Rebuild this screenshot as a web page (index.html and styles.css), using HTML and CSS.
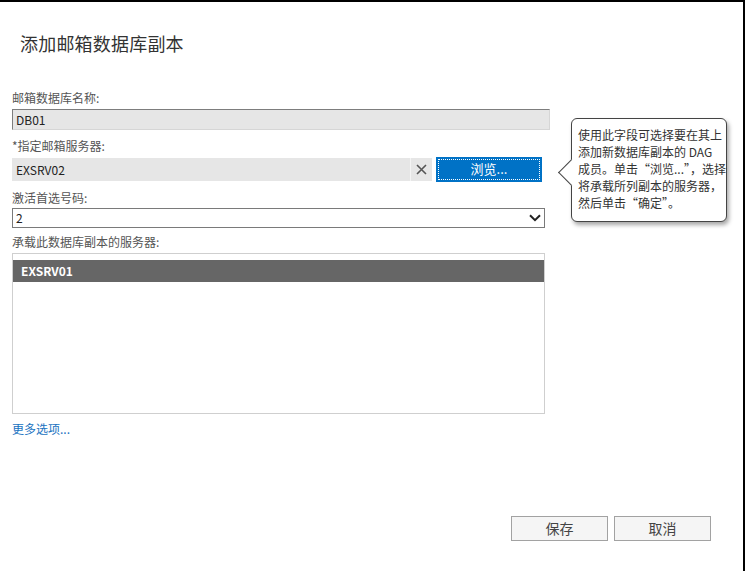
FILE: index.html
```html
<!DOCTYPE html>
<html lang="zh-CN">
<head>
<meta charset="utf-8">
<title>添加邮箱数据库副本</title>
<link rel="stylesheet" href="styles.css">
</head>
<body>
<div class="frame">
  <h1 class="title">添加邮箱数据库副本</h1>
  <div class="form">
    <div class="label first">邮箱数据库名称:</div>
    <div class="input readonly">DB01</div>

    <div class="label">*指定邮箱服务器:</div>
    <div class="picker-row">
      <div class="picker">
        <span class="picker-text">EXSRV02</span>
        <span class="picker-clear">
          <svg width="11" height="11" viewBox="0 0 11 11"><path d="M1 1 L10 10 M10 1 L1 10" stroke="#555" stroke-width="1.6" fill="none"/></svg>
        </span>
      </div>
      <div class="browse"><span class="browse-inner">浏览...</span></div>
    </div>

    <div class="label l3">激活首选号码:</div>
    <div class="select">
      <span>2</span>
      <svg class="chev" width="12" height="8" viewBox="0 0 12 8"><path d="M1 1.2 L6 6.2 L11 1.2" stroke="#222" stroke-width="2" fill="none"/></svg>
    </div>

    <div class="label l4">承载此数据库副本的服务器:</div>
    <div class="list">
      <div class="list-item selected">EXSRV01</div>
    </div>

    <a class="more" href="#">更多选项...</a>
  </div>

  <div class="actions">
    <button class="btn">保存</button>
    <button class="btn">取消</button>
  </div>

  <div class="tip">
    <span class="tip-arrow"></span>
    <div class="tip-text">使用此字段可选择要在其上<br>添加新数据库副本的 DAG<br>成员。单击“浏览...”，选择<br>将承载所列副本的服务器，<br>然后单击“确定”。</div>
  </div>
</div>
</body>
</html>
```

FILE: styles.css
```css
* { box-sizing: border-box; }

html, body {
  margin: 0;
  padding: 0;
  background: #fff;
}

body {
  font-family: "Noto Sans CJK SC", "Noto Sans", sans-serif;
  color: #444;
}

.frame {
  position: relative;
  width: 745px;
  height: 571px;
  border-top: 2px solid #000;
  border-right: 2px solid #000;
  overflow: hidden;
}

.title {
  margin: 0;
  padding: 29px 0 0 20px;
  font-size: 18px;
  line-height: 24px;
  font-weight: normal;
  color: #333;
  letter-spacing: 0.2px;
}

.form {
  padding-left: 12px;
  width: 551px;
  display: flex;
  flex-direction: column;
}

.label {
  font-size: 12px;
  line-height: 16px;
  height: 16px;
  color: #555;
  margin-top: 8px;
  margin-bottom: 3px;
}

.label.first {
  margin-top: 35px;
}

.label.l3 {
  margin-top: 8px;
  margin-bottom: 2px;
}

.label.l4 {
  margin-top: 6px;
  margin-bottom: 3px;
}

.input {
  height: 21px;
  width: 538px;
  font-size: 12px;
  line-height: 19px;
  padding-left: 3px;
  color: #222;
}

.readonly {
  background: #e6e6e6;
  border: 1px solid;
  border-color: #7d7d7d #d6d6d6 #d6d6d6 #7d7d7d;
}

.picker-row {
  display: flex;
  align-items: center;
  height: 25px;
}

.picker {
  display: flex;
  width: 420px;
  height: 23px;
  background: #e6e6e6;
}

.picker-text {
  flex: 1;
  font-size: 12px;
  line-height: 23px;
  padding-left: 4px;
  color: #222;
}

.picker-clear {
  width: 22px;
  height: 23px;
  border-left: 1px solid #f4f4f4;
  display: flex;
  align-items: center;
  justify-content: center;
}

.browse {
  margin-left: 4px;
  width: 106px;
  height: 25px;
  background: #0072c6;
  padding: 2px;
}

.browse-inner {
  display: block;
  height: 21px;
  border: 1px dotted #fff;
  color: #fff;
  font-size: 13px;
  line-height: 18px;
  text-align: center;
}

.select {
  width: 533px;
  height: 20px;
  border: 1px solid #7a7a7a;
  background: #fff;
  font-size: 12px;
  line-height: 18px;
  padding-left: 3px;
  color: #222;
  display: flex;
  align-items: center;
  justify-content: space-between;
  padding-right: 3px;
}

.chev { display: block; }

.list {
  width: 533px;
  height: 161px;
  border: 1px solid #cfcfcf;
  padding: 6px 0 0 0;
}

.list-item {
  height: 22px;
  line-height: 22px;
  font-size: 12px;
  padding-left: 8px;
}

.list-item.selected {
  background: #666;
  color: #fff;
  font-weight: bold;
}

.more {
  margin-top: 7px;
  font-size: 12px;
  line-height: 16px;
  color: #1a73c1;
  text-decoration: none;
  align-self: flex-start;
}

.actions {
  display: flex;
  justify-content: flex-end;
  gap: 6px;
  padding-right: 32px;
  margin-top: 79px;
}

.btn {
  width: 97px;
  height: 25px;
  background: #f5f5f5;
  border: 1px solid #a2a2a2;
  font-family: "Noto Sans CJK SC", "Noto Sans", sans-serif;
  font-size: 14px;
  line-height: 21px;
  color: #444;
  padding: 0;
}

.tip {
  position: absolute;
  left: 571px;
  top: 116px;
  width: 156px;
  height: 104px;
  background: #fff;
  border: 1px solid #444;
  border-radius: 6px;
  box-shadow: 2px 3px 4px rgba(0, 0, 0, 0.35);
  padding: 7px 4px 0 6px;
}

.tip-arrow {
  position: absolute;
  left: -10px;
  top: 44px;
  width: 19px;
  height: 19px;
  background: #fff;
  border-left: 1px solid #444;
  border-bottom: 1px solid #444;
  transform: rotate(45deg);
}

.tip-text {
  position: relative;
  font-size: 12px;
  line-height: 17px;
  color: #333;
  white-space: nowrap;
}
```
